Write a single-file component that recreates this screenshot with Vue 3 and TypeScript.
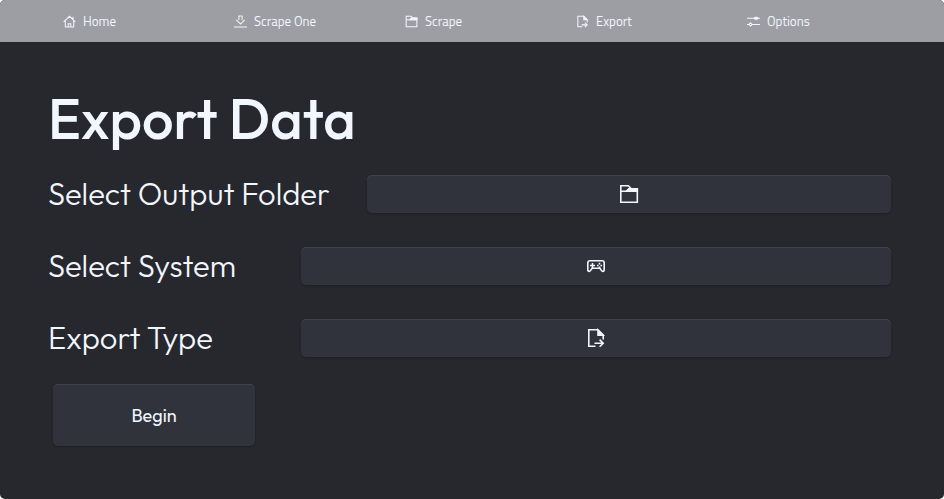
<script setup lang="ts">
type IconName = 'home' | 'download' | 'folder' | 'export' | 'options' | 'gamepad'

interface Shape {
  d: string
  solid?: boolean
}

const icons: Record<IconName, Shape[]> = {
  home: [{ d: 'M1 10.5 10 2l9 8.5M3.5 9v9.5h13V9M15.5 6V2.5M8 18.5v-5h4v5' }],
  download: [{ d: 'M0 18.5h20M7 1.5h6M7.5 1.5v6M12.5 1.5v6M3.5 7.5l6.5 6.5 6.5-6.5' }],
  folder: [
    { d: 'M1.8 1.8h7.5l3 3h6v13.4H1.8zM1.8 7.3h16.5' },
    { d: 'M7.3 7.3l2.5-2.5h8.5v2.5z', solid: true },
  ],
  export: [
    { d: 'M9.5 18.2H2.8V1.8h9l5.4 5.4v4.3M8.5 15.2h8.5M13.6 11.6l3.6 3.6-3.6 3.6' },
    { d: 'M12 2l5.2 5.2H12z', solid: true },
  ],
  options: [
    { d: 'M0 5h20M8 14.5h12M0 14.5h3' },
    { d: 'M12.5 3.5h3L17 5l-1.5 1.5h-3L11 5z', solid: true },
    { d: 'M5.5 12 8 14.5 5.5 17 3 14.5z' },
  ],
  gamepad: [
    { d: 'M4 4.8h12q2.2 0 2.2 2.2v6.2q0 2.2-1.3 2.2-.9 0-1.7-1.3l-1.3-1.9H6.1l-1.3 1.9q-.8 1.3-1.7 1.3-1.3 0-1.3-2.2V7q0-2.2 2.2-2.2z' },
    { d: 'M6.5 7v5M4 9.5h5M13.5 6.8v1.6M13.5 10.4V12M11 9.5h1.6M14.5 9.5h1.6' },
  ],
}

const navigation: { label: string; icon: IconName }[] = [
  { label: 'Home', icon: 'home' },
  { label: 'Scrape One', icon: 'download' },
  { label: 'Scrape', icon: 'folder' },
  { label: 'Export', icon: 'export' },
  { label: 'Options', icon: 'options' },
]

const fields: { id: string; label: string; icon: IconName }[] = [
  { id: 'folder', label: 'Select Output Folder', icon: 'folder' },
  { id: 'system', label: 'Select System', icon: 'gamepad' },
  { id: 'type', label: 'Export Type', icon: 'export' },
]
</script>

<template>
  <div class="window">
    <nav class="nav">
      <a v-for="item in navigation" :key="item.label" class="nav-item">
        <svg class="nav-icon" viewBox="0 0 20 20">
          <path v-for="shape in icons[item.icon]" :key="shape.d" :d="shape.d" :class="{ solid: shape.solid }" />
        </svg>
        <span>{{ item.label }}</span>
      </a>
    </nav>
    <main class="content">
      <h1 class="title">Export Data</h1>
      <div v-for="field in fields" :key="field.id" class="row">
        <span class="label" :class="field.id">{{ field.label }}</span>
        <button class="picker" type="button">
          <svg class="picker-icon" viewBox="0 0 20 20">
            <path v-for="shape in icons[field.icon]" :key="shape.d" :d="shape.d" :class="{ solid: shape.solid }" />
          </svg>
        </button>
      </div>
      <button class="begin" type="button">Begin</button>
    </main>
  </div>
</template>

<style>
body {
  background: #fff;
}
</style>

<style scoped>
.window {
  box-sizing: border-box;
  height: 499px;
  border-radius: 5px;
  background: #27282d;
  color: #f1f6ff;
  font-family: Outfit, Lato, sans-serif;
}
.nav {
  display: grid;
  grid-template-columns: repeat(5, 171px);
  height: 42px;
  padding-left: 63px;
  border-radius: 5px 5px 0 0;
  background: #9d9ea3;
}
.nav-item {
  display: flex;
  align-items: center;
  gap: 7px;
  font-family: "Titillium Web", "Open Sans", sans-serif;
  font-size: 13px;
  white-space: nowrap;
}
.nav-icon {
  width: 13px;
  height: 13px;
}
svg {
  flex: none;
  fill: none;
  stroke: currentColor;
  stroke-width: 1.6;
}
.solid {
  fill: currentColor;
}
.content {
  padding: 44px 53px 0 48px;
}
.title {
  height: 65px;
  margin: 0 0 24px;
  font-size: 56px;
  font-weight: 500;
  line-height: 65px;
  white-space: nowrap;
}
.row {
  display: flex;
  height: 38px;
  margin-bottom: 34px;
}
.label {
  flex: none;
  width: 253px;
  font-size: 31px;
  font-weight: 300;
  line-height: 38px;
  white-space: nowrap;
}
.label.folder {
  width: 319px;
}
.picker,
.begin {
  box-sizing: border-box;
  margin: 0;
  border: 0;
  border-radius: 5px;
  background: #30333b;
  box-shadow: inset 0 1px #404247, 0 1px 2px rgba(0, 0, 0, 0.25);
  color: inherit;
  font-family: inherit;
}
.picker {
  display: flex;
  flex: 1;
  align-items: center;
  justify-content: center;
  padding: 0;
}
.picker-icon {
  width: 20px;
  height: 20px;
}
.begin {
  display: block;
  width: 202px;
  height: 62px;
  margin: -7px 0 0 5px;
  padding: 0;
  font-size: 18px;
}
</style>
